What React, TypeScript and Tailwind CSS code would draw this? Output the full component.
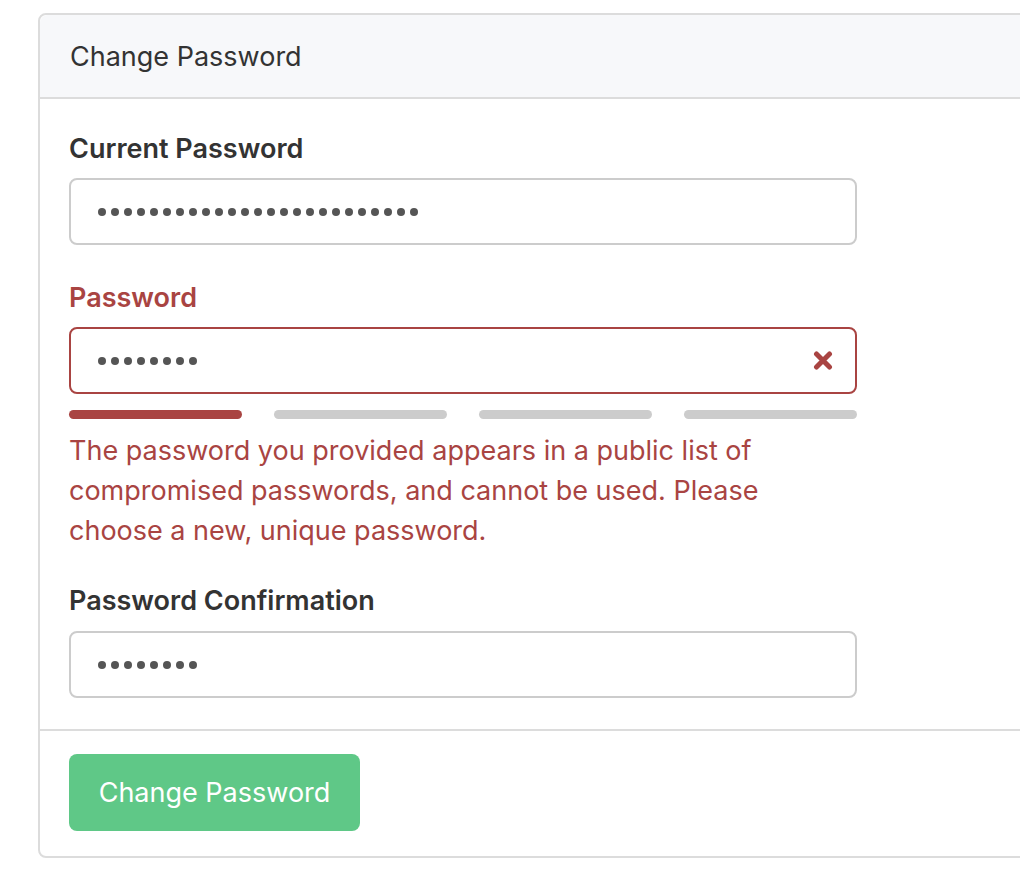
import React from "react";

const font = { fontFamily: "Inter, 'Liberation Sans', sans-serif" };

function Dots({ n }: { n: number }) {
  return (
    <div className="flex items-center gap-[5px]">
      {Array.from({ length: n }).map((_, i) => (
        <span key={i} className="block w-[8px] h-[8px] rounded-full bg-[#555555]" />
      ))}
    </div>
  );
}

function Field({ dots, error }: { dots: number; error?: boolean }) {
  return (
    <div
      className={`w-[788px] h-[67px] rounded-[8px] border-2 bg-white flex items-center justify-between pl-[27px] pr-[22px] ${
        error ? "border-[#a94442]" : "border-[#cccccc]"
      }`}
    >
      <Dots n={dots} />
      {error && (
        <svg width="20" height="19" viewBox="0 0 20 19">
          <path d="M3.5 3 L16.5 16 M16.5 3 L3.5 16" stroke="#a94442" strokeWidth="5" strokeLinecap="round" />
        </svg>
      )}
    </div>
  );
}

export default function App() {
  return (
    <div className="w-[1020px] h-[876px] overflow-hidden bg-white text-[#333333]" style={font}>
      <div className="ml-[38px] mt-[13px] w-[1100px] rounded-[8px] border-2 border-[#dcdcdc] bg-white">
        <div className="bg-[#f7f8fa] border-b-2 border-[#dcdcdc] rounded-t-[8px] px-[30px] pt-[21px] pb-[19px] text-[27px] leading-[42px]">
          Change Password
        </div>
        <div className="px-[29px] pt-[30px] pb-[31px]">
          <div className="text-[27px] leading-[40px] font-semibold mb-[9px]">Current Password</div>
          <Field dots={25} />
          <div className="text-[27px] leading-[40px] font-semibold mb-[9px] mt-[33px] text-[#a94442]">Password</div>
          <Field dots={8} error />
          <div className="w-[788px] flex gap-[32px] mt-[16px]">
            <div className="flex-1 h-[9px] rounded-full bg-[#a94442]" />
            <div className="flex-1 h-[9px] rounded-full bg-[#cccccc]" />
            <div className="flex-1 h-[9px] rounded-full bg-[#cccccc]" />
            <div className="flex-1 h-[9px] rounded-full bg-[#cccccc]" />
          </div>
          <div className="w-[720px] mt-[12px] text-[27px] leading-[40px] text-[#a94442]">
            The password you provided appears in a public list of compromised passwords, and cannot be used. Please choose a new, unique password.
          </div>
          <div className="text-[27px] leading-[40px] font-semibold mb-[10px] mt-[30px]">Password Confirmation</div>
          <Field dots={8} />
        </div>
        <div className="border-t-2 border-[#dcdcdc] px-[29px] pt-[23px] pb-[25px]">
          <button className="w-[291px] h-[77px] rounded-[8px] bg-[#5fc887] text-white text-[27px] leading-[40px]">
            Change Password
          </button>
        </div>
      </div>
    </div>
  );
}
